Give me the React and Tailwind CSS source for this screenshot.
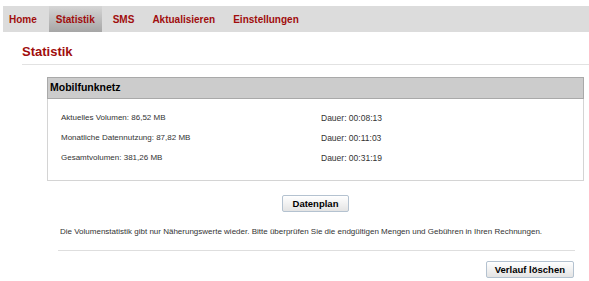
import React from 'react';

const tabs = ['Home', 'Statistik', 'SMS', 'Aktualisieren', 'Einstellungen'];

const rows = [
  { label: 'Aktuelles Volumen: 86,52 MB', time: 'Dauer: 00:08:13' },
  { label: 'Monatliche Datennutzung: 87,82 MB', time: 'Dauer: 00:11:03' },
  { label: 'Gesamtvolumen: 381,26 MB', time: 'Dauer: 00:31:19' },
];

const Button = ({ children, className = '' }) => (
  <button
    type="button"
    className={`h-[17px] border border-[#b4c2d0] rounded-[2px] bg-gradient-to-b from-white to-[#e4e4e4] text-[9.5px] font-bold text-black leading-none ${className}`}
  >
    {children}
  </button>
);

const App = () => {
  return (
    <div className="w-[589px] h-[281px] bg-white overflow-hidden font-['Liberation_Sans',Arial,sans-serif]">
      <nav className="mt-[6px] ml-[3px] h-[26px] bg-[#dcdcdc] flex items-stretch gap-[4px]">
        {tabs.map((tab) => (
          <div
            key={tab}
            className={`flex items-center px-[7px] text-[10px] font-bold text-[#a00d0d] ${
              tab === 'Statistik' ? 'bg-gradient-to-b from-[#d6d6d6] to-[#a6a6a6]' : ''
            } ${tab === 'Home' ? 'pl-[6px] pr-[8px]' : ''}`}
          >
            {tab}
          </div>
        ))}
      </nav>

      <div className="pl-[22px]">
        <h2 className="mt-[12px] pb-[4px] h-[21px] text-[13px] leading-[16px] font-bold text-[#a00d0d] border-b border-[#e2e2e2]">
          Statistik
        </h2>

        <div className="ml-[25px] mr-[5px]">
          <div className="mt-[12px] border border-[#d4d4d4]">
            <div className="h-[22px] bg-[#cccccc] border border-[#a9a9a9] -m-px flex items-center pl-[2px] text-[10.5px] font-bold text-black">
              Mobilfunknetz
            </div>
            <div className="pt-[10px] pb-[12px] pl-[13px] pr-[13px]">
              {rows.map((row) => (
                <div key={row.label} className="grid grid-cols-[260px_1fr] h-[20px] items-center text-[8px] text-[#333]">
                  <span>{row.label}</span>
                  <span className="text-[8.5px]">{row.time}</span>
                </div>
              ))}
            </div>
          </div>

          <div className="mt-[14px] flex justify-center">
            <Button className="px-[10px]">Datenplan</Button>
          </div>

          <div className="pl-[11px] pr-[9px]">
            <p className="mt-[13px] pl-[2px] text-[8px] leading-[14px] text-[#333]">
              Die Volumenstatistik gibt nur Näherungswerte wieder. Bitte überprüfen Sie die endgültigen Mengen und Gebühren in Ihren Rechnungen.
            </p>
            <div className="mt-[11px] border-t border-[#dedede]" />
            <div className="mt-[10px] flex justify-end pr-[1px]">
              <Button className="px-[8px]">Verlauf löschen</Button>
            </div>
          </div>
        </div>
      </div>
    </div>
  );
};

export default App;
